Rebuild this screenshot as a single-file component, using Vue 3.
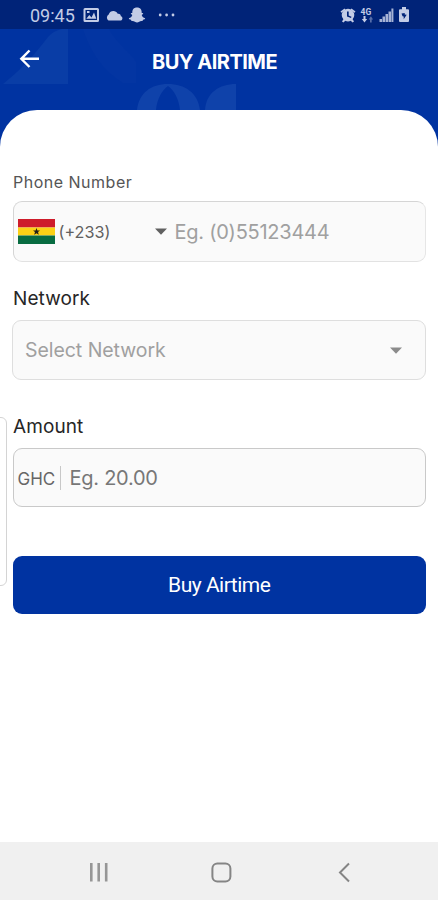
<script setup>
import { ref } from 'vue'

const phone = ref('')
const amount = ref('')
</script>

<template>
  <div class="screen">
    <div class="status">
      <span class="clock">09:45</span>
      <svg class="status-left" width="94" height="18" viewBox="0 0 94 18">
        <path fill-rule="evenodd" d="M2 1h12.500a1.500 1.500 0 0 1 1.500 1.500v11a1.500 1.500 0 0 1-1.500 1.500H2a1.500 1.500 0 0 1-1.500-1.500v-11A1.500 1.500 0 0 1 2 1zM2.500 3v10h11.500V3zM3.300 11.800l3-3.800 2.200 2.500 2.500-5 2.300 6.300zM4 4h2.500v2H4z" />
        <path d="M25.500 13.500a3.500 3.500 0 0 1 .2-6c1.300-4.300 7.200-4.600 9-.7 2.300-.3 3.200 1.300 3.200 2.400 2.300.6 2 4.300-.6 4.300z" />
        <path d="M54 .500c3.300 0 4.900 2.200 4.700 5.500 1.100 0 2 .1 1.300 1l-1.300.9c.6 1.900 1.800 2.800 3.400 3.300.3.900-.8 1.200-2.100 1.600l-.5 1.200c-1.700-.2-2.400.1-3.300.8-1.400 1-2.900 1-4.300 0-.9-.7-1.700-1-3.400-.8l-.5-1.200c-1.300-.4-2.400-.7-2.100-1.600 1.700-.5 2.800-1.400 3.400-3.300L48 7c-.7-.9.200-1 1.300-1C49.100 2.700 50.700.5 54 .5z" />
        <circle cx="77.200" cy="8" r="1.400" /><circle cx="83.600" cy="8" r="1.400" /><circle cx="90" cy="8" r="1.400" />
      </svg>
      <svg class="status-right" width="72" height="18" viewBox="0 0 72 18">
        <path d="M.500 4.500l4-3 1 1.200-4 3zM11.500 1.500l4 3-1 1.200-4-3z" />
        <path fill-rule="evenodd" d="M8 1.800a6.300 6.300 0 1 1 0 12.600 6.300 6.300 0 0 1 0-12.600zm-1 2.700v5l4 1.500.5-1.300-2.800-1.200v-4z" />
        <path d="M3.500 12l2 1.500-2 2-1.500-1zM12.500 12l-2 1.500 2 2 1.500-1z" />
        <text x="20.500" y="7.800" class="net">4G</text>
        <path d="M23.500 9h2v3h1.700l-2.700 3.500-2.700-3.500h1.700z" />
        <path opacity=".45" d="M30 15.500h1.700v-3h1.400l-2.200-3.300-2.200 3.300H30z" />
        <path opacity=".85" d="M39.500 12h2.500v3h-2.500zM42.500 9.500H45V15h-2.500zM45.500 7H48v8h-2.500zM48.500 4.500h2.500V15h-2.500zM51.400 1.500h2V15h-2z" />
        <path fill-rule="evenodd" d="M62 0h4v2.300h2a1 1 0 0 1 1 1V14a1 1 0 0 1-1 1h-8a1 1 0 0 1-1-1V3.300a1 1 0 0 1 1-1h2zM61.500 6.500l1 2.700 1.200.3v2.800l3-4.600-2-.3V6z" />
      </svg>
    </div>

    <header class="header">
      <svg class="pattern" width="438" height="81" viewBox="0 0 438 81">
        <path d="M3 55C18 43 33 28 48 8Q53 2 62 0H68V55z" fill="#093da6" />
        <path d="M83 0h26c8 16 22 23 27 33v21h-13C105 43 91 26 83 0z" fill="#0335a2" />
        <path d="M137 81C139 64 151 55 168 55c17 0 30 9 32 26h-20c-1-11-6-20-12-24-6 4-11 13-12 24z" fill="#0f42aa" />
        <path d="M205 81c1-17 14-26 31-26v26z" fill="#0f42aa" />
      </svg>
      <svg class="back" width="22" height="22" viewBox="0 0 22 22">
        <path d="M11.500 2.500L3.300 10.800l8.200 8.200M3.500 10.800H21" fill="none" stroke="#fff" stroke-width="2.400" />
      </svg>
      <h1>BUY AIRTIME</h1>
    </header>

    <main class="sheet">
      <label class="label phone-label">Phone Number</label>
      <div class="field phone-field">
        <svg class="flag" width="37" height="25" viewBox="0 0 37 25">
          <path fill="#ce1c2b" d="M0 0h37v8.500H0z" /><path fill="#fcd116" d="M0 8.500h37v8H0z" /><path fill="#086c41" d="M0 16.500h37V25H0z" />
          <path fill="#222018" d="M18.500 8.900l.9 2.500h2.600L20 13.100l.8 2.600-2.300-1.500-2.300 1.500.8-2.600-2-1.700h2.600z" />
        </svg>
        <span class="code">(+233)</span>
        <svg class="arrow dark" width="12" height="7" viewBox="0 0 12 7"><path d="M0 .5h12L6 6.700z" /></svg>
        <input v-model="phone" class="phone-input" placeholder="Eg. (0)55123444">
      </div>

      <label class="label network-label">Network</label>
      <div class="field network-field">
        <span class="select-text">Select Network</span>
        <svg class="arrow" width="12" height="7" viewBox="0 0 12 7"><path d="M0 .5h12L6 6.700z" /></svg>
      </div>

      <label class="label amount-label">Amount</label>
      <div class="field amount-field">
        <span class="currency">GHC</span>
        <i class="divider"></i>
        <input v-model="amount" class="amount-input" placeholder="Eg. 20.00">
      </div>

      <button class="buy">Buy Airtime</button>
      <div class="edge-handle"></div>
    </main>

    <nav class="nav">
      <svg width="438" height="58" viewBox="0 0 438 58" fill="none" stroke="#858585">
        <path d="M91.300 21v18.500M98.700 21v18.500M106.200 21v18.500" stroke="#969696" stroke-width="2.600" />
        <rect x="212.400" y="21.400" width="18" height="18" rx="5" stroke-width="2" />
        <path d="M349 21.500l-9 9 9 9" stroke-width="2" />
      </svg>
    </nav>
  </div>
</template>

<style>
body {
  margin: 0;
}
</style>

<style scoped>
.screen {
  width: 438px;
  height: 900px;
  display: flex;
  flex-direction: column;
  position: relative;
  overflow: hidden;
  background: #0033a1;
  font-family: Inter, "Liberation Sans", sans-serif;
}
.status {
  height: 29px;
  flex: none;
  box-sizing: border-box;
  padding: 0 26px 0 30px;
  display: flex;
  align-items: center;
  background: #002378;
  color: #c3cce6;
}
.clock {
  width: 53px;
  font: 400 18px/29px Roboto, sans-serif;
  white-space: nowrap;
  padding-top: 2px;
}
.status svg {
  fill: #c3cce6;
  margin-top: 3px;
}
.status-right {
  margin-left: auto;
}
.net {
  font: 700 8.500px Roboto, sans-serif;
}
.header {
  height: 81px;
  flex: none;
  display: flex;
  position: relative;
}
.pattern {
  position: absolute;
  left: 0;
  top: 0;
}
.back {
  position: relative;
  margin: 19px 0 0 18px;
}
h1 {
  position: relative;
  margin: 20px 0 0 112px;
  font-size: 20px;
  line-height: 26px;
  font-weight: 700;
  letter-spacing: -0.500px;
  color: #fff;
  white-space: nowrap;
}
.sheet {
  flex: 1;
  display: flex;
  flex-direction: column;
  position: relative;
  padding: 0 12px;
  background: #fff;
  border-radius: 37px 37px 0 0;
}
.label {
  margin-left: 1px;
  font-size: 19px;
  line-height: 24px;
  letter-spacing: 0.100px;
  color: #262626;
}
.phone-label {
  margin-top: 60px;
  font-size: 16px;
  letter-spacing: 0.500px;
  color: #555;
}
.network-label {
  margin-top: 25px;
}
.amount-label {
  margin-top: 35px;
}
.field {
  box-sizing: border-box;
  display: flex;
  align-items: center;
  border: 1px solid #dedede;
  border-radius: 9px;
  background: #fafafa;
}
.phone-field {
  height: 61px;
  margin-top: 7px;
  padding-left: 4px;
  border-color: #d5d5d5 #e6e6e6 #e2e2e2 #d5d5d5;
}
.flag {
  flex: none;
}
.code {
  width: 96px;
  margin-left: 4px;
  font-size: 16.200px;
  color: #606060;
}
.arrow {
  flex: none;
  fill: #8b8b8b;
}
.arrow.dark {
  fill: #606060;
}
input {
  flex: 1;
  min-width: 0;
  padding: 0;
  border: 0;
  outline: 0;
  background: none;
  font: 400 20px/26px Inter, sans-serif;
  letter-spacing: -0.250px;
}
input::placeholder {
  color: #a0a0a0;
  opacity: 1;
}
.phone-input {
  margin-left: 8px;
}
.network-field {
  height: 60px;
  margin-top: 9px;
  padding: 0 23px 0 12px;
  justify-content: space-between;
}
.select-text {
  font-size: 19.500px;
  letter-spacing: -0.050px;
  color: #a0a0a0;
}
.amount-field {
  height: 59px;
  margin-top: 9px;
  padding-left: 4px;
  border-color: #c9c9c9;
}
.currency {
  width: 42px;
  font-size: 17px;
  color: #666;
  padding-top: 2px;
}
.divider {
  width: 1px;
  height: 24px;
  background: #c8c8c8;
}
.amount-input {
  margin-left: 9px;
}
.amount-input::placeholder {
  color: #777;
}
.buy {
  height: 58px;
  margin-top: 49px;
  padding: 0;
  border: 0;
  border-radius: 9px;
  background: #0033a1;
  color: #fff;
  font: 400 21px/58px Roboto, sans-serif;
  letter-spacing: -0.500px;
}
.phone-field,
.amount-field,
.buy {
  margin-left: 0.500px;
}
.edge-handle {
  position: absolute;
  left: -11px;
  top: 307px;
  width: 16px;
  height: 167px;
  border: 1px solid #d4d4d4;
  border-radius: 6px;
}
.nav {
  height: 58px;
  flex: none;
  background: #f0f0f0;
}
.nav svg {
  display: block;
}
</style>
